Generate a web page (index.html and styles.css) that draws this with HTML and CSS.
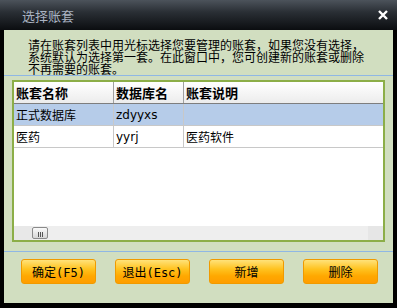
FILE: index.html
```html
<!DOCTYPE html>
<html lang="zh">
<head>
<meta charset="utf-8">
<link rel="stylesheet" href="styles.css">
</head>
<body>
<div class="window">
  <div class="titlebar">
    <span class="title">选择账套</span>
    <span class="close">
      <svg width="10" height="10" viewBox="0 0 10 10"><path d="M1 1 L9 9 M9 1 L1 9" stroke="#fff" stroke-width="2.4"/></svg>
    </span>
  </div>
  <div class="content">
    <p class="desc">请在账套列表中用光标选择您要管理的账套，如果您没有选择，<br>系统默认为选择第一套。在此窗口中，您可创建新的账套或删除<br>不再需要的账套。</p>
    <div class="rule"></div>
    <div class="gridbox">
      <div class="grid">
        <div class="row head">
          <div class="cell c1">账套名称</div>
          <div class="cell c2">数据库名</div>
          <div class="cell c3">账套说明</div>
        </div>
        <div class="row sel">
          <div class="cell c1">正式数据库</div>
          <div class="cell c2">zdyyxs</div>
          <div class="cell c3"></div>
        </div>
        <div class="row">
          <div class="cell c1">医药</div>
          <div class="cell c2">yyrj</div>
          <div class="cell c3">医药软件</div>
        </div>
      </div>
      <div class="hscroll">
        <div class="sb-left"></div>
        <div class="thumb"><span></span><span></span><span></span></div>
        <div class="sb-track"></div>
        <div class="sb-right"></div>
      </div>
    </div>
    <div class="rule rule2"></div>
    <div class="buttons">
      <button class="btn">确定(F5)</button>
      <button class="btn">退出(Esc)</button>
      <button class="btn">新增</button>
      <button class="btn">删除</button>
    </div>
  </div>
</div>
</body>
</html>
```
FILE: styles.css
```css
html, body {
  margin: 0;
  padding: 0;
  background: #000;
}
.window {
  width: 397px;
  height: 308px;
  background: #000;
  font-family: "DejaVu Sans", "Noto Sans CJK SC", sans-serif;
  font-size: 12px;
  color: #000;
  display: flex;
  flex-direction: column;
}
.titlebar {
  height: 30px;
  background: linear-gradient(#4c535b 0%, #2a2f35 40%, #0b0d10 100%);
  display: flex;
  align-items: center;
  justify-content: space-between;
  padding: 0 9px 0 22px;
  box-sizing: border-box;
}
.title {
  color: #aab3c2;
  font-size: 13px;
  font-family: "Noto Sans CJK SC", sans-serif;
}
.close {
  display: flex;
  width: 10px;
  height: 10px;
}
.content {
  margin: 0 4px;
  height: 273px;
  background: #d1dec0;
  display: flex;
  flex-direction: column;
}
.desc {
  margin: 0;
  padding: 9px 0 0 24px;
  height: 45px;
  box-sizing: border-box;
  font-family: "Noto Sans CJK SC", sans-serif;
  font-size: 12px;
  line-height: 12px;
}
.rule {
  height: 1px;
  background: #8fb7e4;
}
.gridbox {
  margin: 4px 0 0 8px;
  width: 373px;
  height: 162px;
  box-sizing: border-box;
  border: 2px solid #8cae48;
  background: #fff;
  display: flex;
  flex-direction: column;
}
.grid {
  flex: 1;
}
.row {
  display: flex;
  height: 21px;
  border-bottom: 1px solid #c8c8c8;
}
.row.head {
  height: 21px;
  background: linear-gradient(#ffffff, #ececec);
  border-bottom: 1px solid #7e7e7e;
  font-weight: bold;
  font-size: 13px;
}
.row.sel {
  background: #b6cce9;
}
.cell {
  display: flex;
  align-items: center;
  padding-left: 2px;
  box-sizing: border-box;
  border-right: 1px solid #c8c8c8;
}
.head .cell {
  border-right: 1px solid #a0a0a0;
  font-family: "Noto Sans CJK SC", sans-serif;
}
.c1 { width: 100px; }
.c2 { width: 70px; }
.c3 { flex: 1; border-right: none; }
.head .c3 { border-right: none; }
.hscroll {
  height: 14px;
  background: #eeeeee;
  display: flex;
  align-items: center;
}
.sb-left {
  width: 18px;
  height: 14px;
  background: #e8e8e8;
}
.thumb {
  width: 14px;
  height: 9px;
  border: 1px solid #8a8a8a;
  border-radius: 2px;
  background: linear-gradient(#fafafa, #d6d6d6);
  display: flex;
  justify-content: center;
  align-items: flex-end;
  gap: 1px;
  padding-bottom: 1px;
}
.thumb span {
  width: 1px;
  height: 5px;
  background: #555;
}
.sb-track {
  flex: 1;
}
.sb-right {
  width: 15px;
  height: 14px;
  background: #e6e6e6;
}
.rule2 {
  margin-top: 9px;
}
.buttons {
  display: flex;
  gap: 19px;
  padding: 7px 0 0 17px;
}
.btn {
  width: 75px;
  height: 25px;
  margin: 0;
  padding: 0;
  border: 1px solid #f09a00;
  border-radius: 3px;
  background: linear-gradient(#ffe27a 0%, #ffc21e 40%, #ffa800 70%, #ff9d00 100%);
  font-family: "DejaVu Sans Mono", "Noto Sans CJK SC", monospace;
  font-size: 12px;
  color: #000;
}
```
